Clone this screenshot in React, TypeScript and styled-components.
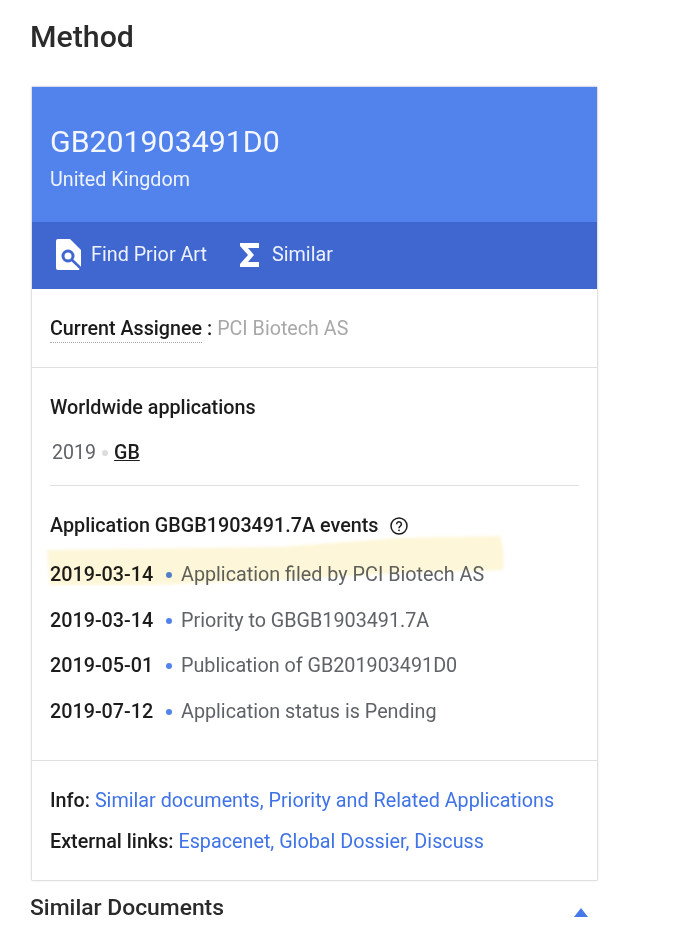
import styled, { createGlobalStyle } from "styled-components";

const GlobalStyle = createGlobalStyle`
  html, body {
    margin: 0;
    padding: 0;
    background: #fff;
  }
  body {
    font-family: Roboto, "Liberation Sans", sans-serif;
    color: #212121;
  }
`;

const Page = styled.div`
  position: relative;
  width: 690px;
  height: 946px;
  overflow: hidden;
  padding: 0 92px 0 30px;
  box-sizing: border-box;
`;

const Title = styled.h1`
  margin: 0;
  padding-top: 19px;
  height: 86px;
  box-sizing: border-box;
  font-size: 30.3px;
  line-height: 36px;
  font-weight: 500;
  color: #2b2b2b;
`;

const Card = styled.div`
  margin-left: 1px;
  width: 567px;
  height: 795px;
  box-sizing: border-box;
  border: 1px solid #e0e0e0;
  border-top: 1px solid #d8def0;
  border-radius: 2px;
  box-shadow: 0 0 2px rgba(0, 0, 0, 0.12);
  display: flex;
  flex-direction: column;
`;

const Header = styled.div`
  height: 135px;
  box-sizing: border-box;
  background: #5283ec;
  padding: 37px 18px 0;
  color: #fff;
`;

const DocNumber = styled.div`
  font-size: 30.3px;
  line-height: 36px;
  color: #f4f7fe;
`;

const Country = styled.div`
  font-size: 19.7px;
  line-height: 24px;
  margin-top: 8px;
  color: #eef3fd;
`;

const ActionBar = styled.div`
  height: 67px;
  background: #4066d0;
  display: flex;
  align-items: center;
  padding: 0 0 2px 24px;
  box-sizing: border-box;
`;

const Action = styled.div<{ $gap: number; $after?: number }>`
  display: flex;
  align-items: center;
  gap: ${(p) => p.$gap}px;
  margin-right: ${(p) => p.$after ?? 0}px;
  font-size: 19.75px;
  color: #eef2fc;
`;

const Section = styled.div<{ $height: number }>`
  height: ${(p) => p.$height}px;
  box-sizing: border-box;
  padding: 0 18px;
  border-bottom: 1px solid #e0e0e0;
`;

const AssigneeRow = styled.div`
  padding-top: 28px;
  font-size: 19.7px;
  line-height: 24px;
  color: #a8a8a8;
`;

const AssigneeLabel = styled.span`
  font-weight: 500;
  color: #1a1a1a;
  margin-right: 5px;
`;

const AssigneeTerm = styled.span`
  border-bottom: 1px dotted #aaa;
  padding-bottom: 2px;
`;

const Heading = styled.div<{ $top: number }>`
  padding-top: ${(p) => p.$top}px;
  font-size: 19.75px;
  line-height: 24px;
  font-weight: 500;
  color: #1c1c1c;
  display: flex;
  align-items: center;
  gap: 12px;
`;

const YearRow = styled.div`
  margin-top: 21px;
  padding-left: 2px;
  padding-bottom: 20px;
  border-bottom: 1px solid #e0e0e0;
  font-size: 19.6px;
  line-height: 24px;
  color: #5f6368;
  display: flex;
  align-items: center;
`;

const YearDot = styled.span`
  width: 6px;
  height: 6px;
  border-radius: 50%;
  background: #dcdcdc;
  margin: 0 6px;
`;

const CountryLink = styled.span`
  color: #1c1c1c;
  font-weight: 500;
  text-decoration: underline;
`;

const Events = styled.div`
  margin-top: 25px;
  display: flex;
  flex-direction: column;
  gap: 21.5px;
`;

const EventRow = styled.div`
  display: flex;
  align-items: center;
  height: 24px;
  font-size: 19.75px;
  line-height: 24px;
  color: #5f6368;
`;

const EventDate = styled.span`
  font-weight: 500;
  color: #1c1c1c;
  width: 116px;
`;

const EventDot = styled.span`
  width: 6px;
  height: 6px;
  border-radius: 50%;
  background: #5283ec;
  margin-right: 9px;
`;

const LinksBlock = styled.div`
  padding: 28px 18px 0;
  display: flex;
  flex-direction: column;
  gap: 17px;
`;

const LinkRow = styled.div`
  font-size: 19.75px;
  line-height: 24px;
  font-weight: 500;
  color: #1c1c1c;
`;

const LinkText = styled.span`
  font-weight: 400;
  color: #3f73e6;
`;

const SimilarRow = styled.div`
  display: flex;
  justify-content: space-between;
  align-items: flex-start;
  margin-top: 13px;
`;

const SimilarTitle = styled.div`
  font-size: 22.85px;
  line-height: 28px;
  font-weight: 500;
  color: #2b2b2b;
`;

const Arrow = styled.div`
  width: 0;
  height: 0;
  margin: 14px 10.5px 0 0;
  border-left: 7.5px solid transparent;
  border-right: 7.5px solid transparent;
  border-bottom: 9px solid #4578e8;
`;

const Highlight = styled.svg`
  position: absolute;
  left: 0;
  top: 0;
  pointer-events: none;
  mix-blend-mode: multiply;
  filter: blur(1.5px);
`;

const events = [
  ["2019-03-14", "Application filed by PCI Biotech AS"],
  ["2019-03-14", "Priority to GBGB1903491.7A"],
  ["2019-05-01", "Publication of GB201903491D0"],
  ["2019-07-12", "Application status is Pending"],
];

function PriorArtIcon() {
  return (
    <svg width="25" height="31" viewBox="0 0 25 31">
      <path
        d="M2 0h12l11 11v17l-2 3H2a2 2 0 0 1-2-2V2a2 2 0 0 1 2-2z"
        fill="#fff"
      />
      <circle cx="12" cy="17" r="5" fill="none" stroke="#4066d0" strokeWidth="3" />
      <path d="M15.5 20.5L25 29.5" stroke="#4066d0" strokeWidth="2.6" />
    </svg>
  );
}

function SigmaIcon() {
  return (
    <svg width="19" height="24" viewBox="0 0 19 24">
      <path d="M0 0h19v5H8l6 7-6 7h11v5H0v-3l8-9-8-9z" fill="#fff" />
    </svg>
  );
}

function HelpIcon() {
  return (
    <svg width="18" height="18" viewBox="0 0 18 18">
      <circle cx="9" cy="9" r="8" fill="none" stroke="#1c1c1c" strokeWidth="1.5" />
      <path
        d="M6.6 7.2a2.4 2.4 0 1 1 3.7 2c-.9.6-1.3 1-1.3 2"
        fill="none"
        stroke="#1c1c1c"
        strokeWidth="1.5"
      />
      <circle cx="9" cy="13.3" r="0.9" fill="#1c1c1c" />
    </svg>
  );
}

export default function App() {
  return (
    <Page>
      <GlobalStyle />
      <Title>Method</Title>
      <Card>
        <Header>
          <DocNumber>GB201903491D0</DocNumber>
          <Country>United Kingdom</Country>
        </Header>
        <ActionBar>
          <Action $gap={10} $after={33}>
            <PriorArtIcon />
            Find Prior Art
          </Action>
          <Action $gap={13}>
            <SigmaIcon />
            Similar
          </Action>
        </ActionBar>
        <Section $height={79}>
          <AssigneeRow>
            <AssigneeLabel>
              <AssigneeTerm>Current Assignee</AssigneeTerm> :
            </AssigneeLabel>
            PCI Biotech AS
          </AssigneeRow>
        </Section>
        <Section $height={393}>
          <Heading $top={28}>Worldwide applications</Heading>
          <YearRow>
            2019
            <YearDot />
            <CountryLink>GB</CountryLink>
          </YearRow>
          <Heading $top={28}>
            Application GBGB1903491.7A events
            <HelpIcon />
          </Heading>
          <Events>
            {events.map(([date, text], i) => (
              <EventRow key={i}>
                <EventDate>{date}</EventDate>
                <EventDot />
                {text}
              </EventRow>
            ))}
          </Events>
        </Section>
        <LinksBlock>
          <LinkRow>
            Info: <LinkText>Similar documents, Priority and Related Applications</LinkText>
          </LinkRow>
          <LinkRow>
            External links: <LinkText>Espacenet, Global Dossier, Discuss</LinkText>
          </LinkRow>
        </LinksBlock>
      </Card>
      <SimilarRow>
        <SimilarTitle>Similar Documents</SimilarTitle>
        <Arrow />
      </SimilarRow>
      <Highlight width="690" height="946">
        <path
          d="M47 550L280 547L400 538L500 536Q505 552 503 570L400 573L280 580L150 585L50 585Z"
          fill="#fdf6d8"
        />
      </Highlight>
    </Page>
  );
}
